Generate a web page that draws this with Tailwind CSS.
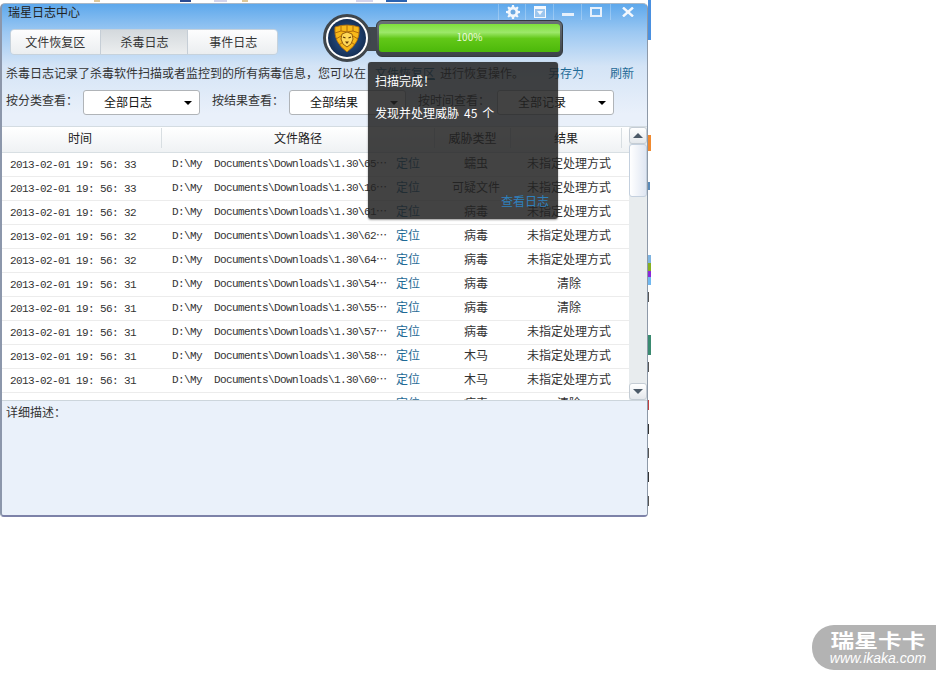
<!DOCTYPE html>
<html lang="zh-CN">

<head>
  <meta charset="UTF-8">
  <title>瑞星日志中心</title>
  <script src="https://cdn.jsdelivr.net/npm/@tailwindcss/browser@4"></script>
</head>

<body class="bg-white font-['Noto_Sans_CJK_SC','Liberation_Sans',sans-serif] text-[12px] leading-none text-[#333]">
  <div class="relative h-[677px] w-[946px] overflow-hidden pt-[3px]">

    <!-- Bits of the page behind the window -->
    <div class="absolute top-0 left-[94px] h-[2px] w-[6px] bg-[#e0c898]"></div>
    <div class="absolute top-0 left-[180px] h-[2px] w-[11px] bg-[#2a4a90]"></div>
    <div class="absolute top-0 left-[214px] h-[2px] w-[13px] bg-[#d4d4ec]"></div>
    <div class="absolute top-0 left-[242px] h-[2px] w-[6px] bg-[#e0c898]"></div>
    <div class="absolute top-0 left-[356px] h-[2px] w-[17px] bg-[#d4d4ec]"></div>
    <div class="absolute top-0 left-[386px] h-[2px] w-[21px] bg-[#2a62b0]"></div>
    <div class="absolute top-0 left-[648px] h-[40px] w-[3px] bg-[#4a90e0]"></div>
    <div class="absolute top-[135px] left-[648px] h-[16px] w-[3px] bg-[#f08a30]"></div>
    <div class="absolute top-[182px] left-[648px] h-[8px] w-[2px] bg-[#5a8ab8]"></div>
    <div class="absolute top-[255px] left-[648px] h-[8px] w-[3px] bg-[#7fb4e0]"></div>
    <div class="absolute top-[263px] left-[648px] h-[8px] w-[3px] bg-[#86b020]"></div>
    <div class="absolute top-[271px] left-[648px] h-[6px] w-[3px] bg-[#8a28d8]"></div>
    <div class="absolute top-[277px] left-[648px] h-[8px] w-[3px] bg-[#70b8f0]"></div>
    <div class="absolute top-[292px] left-[648px] h-[10px] w-[1px] bg-[#555]"></div>
    <div class="absolute top-[335px] left-[648px] h-[20px] w-[3px] bg-[#3a8a70]"></div>
    <div class="absolute top-[362px] left-[648px] h-[10px] w-[1px] bg-[#555]"></div>
    <div class="absolute top-[400px] left-[648px] h-[10px] w-[1px] bg-[#c04040]"></div>
    <div class="absolute top-[424px] left-[648px] h-[10px] w-[1px] bg-[#333]"></div>
    <div class="absolute top-[448px] left-[648px] h-[10px] w-[1px] bg-[#555]"></div>
    <div class="absolute top-[472px] left-[648px] h-[10px] w-[1px] bg-[#333]"></div>
    <div class="absolute top-[496px] left-[648px] h-[10px] w-[1px] bg-[#555]"></div>

    <!-- Window -->
    <div class="relative flex h-[514px] w-[648px] flex-col overflow-hidden rounded-t-[5px] rounded-b-[4px] border-t border-r border-b-2 border-l-2 border-t-[#a8b8c8] border-r-[#8d99a8] border-b-[#7d82a8] border-l-[#8c97ab] bg-[linear-gradient(180deg,#5da8ec_0px,#9cc8f2_28px,#d4e4f6_62px,#e9f0fa_110px)]">

      <!-- Title bar -->
      <div class="flex h-[16px] items-start justify-between">
        <span class="pt-[2px] pl-[6px] text-[#222]">瑞星日志中心</span>
        <div class="flex h-[16px] pr-[2px] text-white">
          <div class="flex w-[28px] items-center justify-center border-x border-white/25 pl-[1px]">
            <svg width="14" height="14" viewBox="0 0 14 14">
              <path d="M6 0h2l.4 2 1.3.6L11.400 1.500 12.600 2.800l-1.100 1.600.5 1.300 2 .3v2l-2 .4-.5 1.300 1.100 1.700-1.300 1.200-1.700-1.100-1.200.5-.4 2H6l-.4-2-1.300-.5-1.600 1.100-1.300-1.200 1.100-1.700-.5-1.300L0 8V6l2-.3.500-1.300L1.400 2.800 2.700 1.500l1.600 1.100L5.600 2z" fill="#f2f7fd" />
              <circle cx="7" cy="7" r="2.500" fill="#6da9e0" />
            </svg>
          </div>
          <div class="flex w-[28px] items-center justify-center border-r border-white/25">
            <svg width="12" height="12" viewBox="0 0 12 12">
              <rect x="0.500" y="0.500" width="11" height="11" fill="#9cc6ee" stroke="#f4f8fd" />
              <path d="M1 1h10v2H1z" fill="#f4f8fd" />
              <path d="M3 5h6L6 9z" fill="#f4f8fd" />
            </svg>
          </div>
          <div class="flex w-[28px] items-center justify-center border-r border-white/25">
            <div class="mt-[5px] h-[3px] w-[12px] bg-[#e6f0fb]"></div>
          </div>
          <div class="flex w-[29px] items-center justify-center border-r border-white/25">
            <div class="h-[10px] w-[12px] border-2 border-[#e6f0fb]"></div>
          </div>
          <div class="flex w-[34px] items-center justify-center">
            <svg width="12" height="10" viewBox="0 0 12 10">
              <path d="M1 0.500l10 9M11 0.500l-10 9" stroke="#f4f8fd" stroke-width="2.400" />
            </svg>
          </div>
        </div>
      </div>

      <!-- Tabs -->
      <div class="mt-[9px] ml-[8px] flex h-[26px] w-[268px] overflow-hidden rounded-[4px] border border-[#c6d2dc] text-[#333]">
        <div class="flex w-[89px] items-center justify-center bg-[linear-gradient(180deg,#fdfdfe,#ebeef0)] pb-[1px]">文件恢复区</div>
        <div class="flex w-[89px] items-center justify-center border-x border-[#c6ced6] bg-[linear-gradient(180deg,#d4d9dd,#eceeef)] pb-[1px] pl-[1px]">杀毒日志</div>
        <div class="flex w-[89px] items-center justify-center bg-[linear-gradient(180deg,#fdfdfe,#ebeef0)] pb-[1px] pl-[1px]">事件日志</div>
      </div>

      <!-- Intro line -->
      <div class="mt-[11px] flex h-[14px] items-center pl-[4px] whitespace-pre">
        <span class="w-[369px]">杀毒日志记录了杀毒软件扫描或者监控到的所有病毒信息，您可以在</span>
        <span class="w-[65px] text-[#1f6a96] underline">文件恢复区</span>
        <span class="w-[108px]">进行恢复操作。</span>
        <span class="w-[62px] text-[#1f6a96]">另存为</span>
        <span class="text-[#1f6a96]">刷新</span>
      </div>

      <!-- Filters -->
      <div class="mt-[10px] flex h-[25px] items-start pl-[4px]">
        <span class="mt-[4px] w-[77px] text-[#333]">按分类查看：</span>
        <div class="flex h-[25px] w-[117px] items-center justify-between rounded-[3px] border border-[#b0b4b8] bg-white pr-[7px] pb-[2px] pl-[20px] text-[#111]">全部日志<i class="mt-[3px] h-0 w-0 border-x-[4px] border-t-[4px] border-x-transparent border-t-black"></i></div>
        <span class="mt-[4px] ml-[12px] w-[77px] text-[#333]">按结果查看：</span>
        <div class="flex h-[25px] w-[117px] items-center justify-between rounded-[3px] border border-[#b0b4b8] bg-white pr-[7px] pb-[2px] pl-[20px] text-[#111]">全部结果<i class="mt-[3px] h-0 w-0 border-x-[4px] border-t-[4px] border-x-transparent border-t-black"></i></div>
        <span class="mt-[4px] ml-[12px] w-[79px] text-[#333]">按时间查看：</span>
        <div class="flex h-[25px] w-[117px] items-center justify-between rounded-[3px] border border-[#b0b4b8] bg-white pr-[7px] pb-[2px] pl-[20px] text-[#111]">全部记录<i class="mt-[3px] h-0 w-0 border-x-[4px] border-t-[4px] border-x-transparent border-t-black"></i></div>
      </div>

      <!-- Table with scrollbar -->
      <div class="mt-[11px] flex h-[274px] border-t border-[#d4dce2] bg-white">
        <div class="w-[628px] overflow-hidden">
          <div class="flex h-[26px] items-center border-b border-[#d8dfe3] bg-[linear-gradient(180deg,#ffffff,#eff2f4)] pb-[4px] text-[#222]">
            <div class="flex h-[20px] w-[160px] items-center justify-center border-r border-[#d8dee2] pr-[3px]">时间</div>
            <div class="flex h-[20px] w-[273px] items-center justify-center border-r border-[#d8dee2]">文件路径</div>
            <div class="flex h-[20px] w-[76px] items-center justify-center border-r border-[#d8dee2]">威胁类型</div>
            <div class="flex h-[20px] w-[111px] items-center justify-center border-r border-[#d8dee2]">结果</div>
          </div>

          <div class="flex h-[24px] items-center border-b border-[#ececec]">
            <span class="mt-[2px] w-[160px] pl-[8px] font-['Liberation_Mono',monospace] text-[11px] tracking-[-0.600px] whitespace-pre">2013-02-01 19: 56: 33</span>
            <span class="mb-[2px] w-[223px] pl-[10px] font-['Liberation_Mono',monospace] text-[11px] tracking-[-0.600px] whitespace-pre">D:\My  Documents\Downloads\1.30\65<b class="font-['Noto_Sans_CJK_SC'] font-normal tracking-normal">⋯</b></span>
            <span class="mb-[4px] w-[50px] pl-[11px] text-[#1f6a96]">定位</span>
            <span class="mb-[4px] w-[82px] text-center">蠕虫</span>
            <span class="mb-[4px] w-[104px] text-center">未指定处理方式</span>
          </div>
          <div class="flex h-[24px] items-center border-b border-[#ececec]">
            <span class="mt-[2px] w-[160px] pl-[8px] font-['Liberation_Mono',monospace] text-[11px] tracking-[-0.600px] whitespace-pre">2013-02-01 19: 56: 33</span>
            <span class="mb-[2px] w-[223px] pl-[10px] font-['Liberation_Mono',monospace] text-[11px] tracking-[-0.600px] whitespace-pre">D:\My  Documents\Downloads\1.30\16<b class="font-['Noto_Sans_CJK_SC'] font-normal tracking-normal">⋯</b></span>
            <span class="mb-[4px] w-[50px] pl-[11px] text-[#1f6a96]">定位</span>
            <span class="mb-[4px] w-[82px] text-center">可疑文件</span>
            <span class="mb-[4px] w-[104px] text-center">未指定处理方式</span>
          </div>
          <div class="flex h-[24px] items-center border-b border-[#ececec]">
            <span class="mt-[2px] w-[160px] pl-[8px] font-['Liberation_Mono',monospace] text-[11px] tracking-[-0.600px] whitespace-pre">2013-02-01 19: 56: 32</span>
            <span class="mb-[2px] w-[223px] pl-[10px] font-['Liberation_Mono',monospace] text-[11px] tracking-[-0.600px] whitespace-pre">D:\My  Documents\Downloads\1.30\61<b class="font-['Noto_Sans_CJK_SC'] font-normal tracking-normal">⋯</b></span>
            <span class="mb-[4px] w-[50px] pl-[11px] text-[#1f6a96]">定位</span>
            <span class="mb-[4px] w-[82px] text-center">病毒</span>
            <span class="mb-[4px] w-[104px] text-center">未指定处理方式</span>
          </div>
          <div class="flex h-[24px] items-center border-b border-[#ececec]">
            <span class="mt-[2px] w-[160px] pl-[8px] font-['Liberation_Mono',monospace] text-[11px] tracking-[-0.600px] whitespace-pre">2013-02-01 19: 56: 32</span>
            <span class="mb-[2px] w-[223px] pl-[10px] font-['Liberation_Mono',monospace] text-[11px] tracking-[-0.600px] whitespace-pre">D:\My  Documents\Downloads\1.30\62<b class="font-['Noto_Sans_CJK_SC'] font-normal tracking-normal">⋯</b></span>
            <span class="mb-[4px] w-[50px] pl-[11px] text-[#1f6a96]">定位</span>
            <span class="mb-[4px] w-[82px] text-center">病毒</span>
            <span class="mb-[4px] w-[104px] text-center">未指定处理方式</span>
          </div>
          <div class="flex h-[24px] items-center border-b border-[#ececec]">
            <span class="mt-[2px] w-[160px] pl-[8px] font-['Liberation_Mono',monospace] text-[11px] tracking-[-0.600px] whitespace-pre">2013-02-01 19: 56: 32</span>
            <span class="mb-[2px] w-[223px] pl-[10px] font-['Liberation_Mono',monospace] text-[11px] tracking-[-0.600px] whitespace-pre">D:\My  Documents\Downloads\1.30\64<b class="font-['Noto_Sans_CJK_SC'] font-normal tracking-normal">⋯</b></span>
            <span class="mb-[4px] w-[50px] pl-[11px] text-[#1f6a96]">定位</span>
            <span class="mb-[4px] w-[82px] text-center">病毒</span>
            <span class="mb-[4px] w-[104px] text-center">未指定处理方式</span>
          </div>
          <div class="flex h-[24px] items-center border-b border-[#ececec]">
            <span class="mt-[2px] w-[160px] pl-[8px] font-['Liberation_Mono',monospace] text-[11px] tracking-[-0.600px] whitespace-pre">2013-02-01 19: 56: 31</span>
            <span class="mb-[2px] w-[223px] pl-[10px] font-['Liberation_Mono',monospace] text-[11px] tracking-[-0.600px] whitespace-pre">D:\My  Documents\Downloads\1.30\54<b class="font-['Noto_Sans_CJK_SC'] font-normal tracking-normal">⋯</b></span>
            <span class="mb-[4px] w-[50px] pl-[11px] text-[#1f6a96]">定位</span>
            <span class="mb-[4px] w-[82px] text-center">病毒</span>
            <span class="mb-[4px] w-[104px] text-center">清除</span>
          </div>
          <div class="flex h-[24px] items-center border-b border-[#ececec]">
            <span class="mt-[2px] w-[160px] pl-[8px] font-['Liberation_Mono',monospace] text-[11px] tracking-[-0.600px] whitespace-pre">2013-02-01 19: 56: 31</span>
            <span class="mb-[2px] w-[223px] pl-[10px] font-['Liberation_Mono',monospace] text-[11px] tracking-[-0.600px] whitespace-pre">D:\My  Documents\Downloads\1.30\55<b class="font-['Noto_Sans_CJK_SC'] font-normal tracking-normal">⋯</b></span>
            <span class="mb-[4px] w-[50px] pl-[11px] text-[#1f6a96]">定位</span>
            <span class="mb-[4px] w-[82px] text-center">病毒</span>
            <span class="mb-[4px] w-[104px] text-center">清除</span>
          </div>
          <div class="flex h-[24px] items-center border-b border-[#ececec]">
            <span class="mt-[2px] w-[160px] pl-[8px] font-['Liberation_Mono',monospace] text-[11px] tracking-[-0.600px] whitespace-pre">2013-02-01 19: 56: 31</span>
            <span class="mb-[2px] w-[223px] pl-[10px] font-['Liberation_Mono',monospace] text-[11px] tracking-[-0.600px] whitespace-pre">D:\My  Documents\Downloads\1.30\57<b class="font-['Noto_Sans_CJK_SC'] font-normal tracking-normal">⋯</b></span>
            <span class="mb-[4px] w-[50px] pl-[11px] text-[#1f6a96]">定位</span>
            <span class="mb-[4px] w-[82px] text-center">病毒</span>
            <span class="mb-[4px] w-[104px] text-center">未指定处理方式</span>
          </div>
          <div class="flex h-[24px] items-center border-b border-[#ececec]">
            <span class="mt-[2px] w-[160px] pl-[8px] font-['Liberation_Mono',monospace] text-[11px] tracking-[-0.600px] whitespace-pre">2013-02-01 19: 56: 31</span>
            <span class="mb-[2px] w-[223px] pl-[10px] font-['Liberation_Mono',monospace] text-[11px] tracking-[-0.600px] whitespace-pre">D:\My  Documents\Downloads\1.30\58<b class="font-['Noto_Sans_CJK_SC'] font-normal tracking-normal">⋯</b></span>
            <span class="mb-[4px] w-[50px] pl-[11px] text-[#1f6a96]">定位</span>
            <span class="mb-[4px] w-[82px] text-center">木马</span>
            <span class="mb-[4px] w-[104px] text-center">未指定处理方式</span>
          </div>
          <div class="flex h-[24px] items-center border-b border-[#ececec]">
            <span class="mt-[2px] w-[160px] pl-[8px] font-['Liberation_Mono',monospace] text-[11px] tracking-[-0.600px] whitespace-pre">2013-02-01 19: 56: 31</span>
            <span class="mb-[2px] w-[223px] pl-[10px] font-['Liberation_Mono',monospace] text-[11px] tracking-[-0.600px] whitespace-pre">D:\My  Documents\Downloads\1.30\60<b class="font-['Noto_Sans_CJK_SC'] font-normal tracking-normal">⋯</b></span>
            <span class="mb-[4px] w-[50px] pl-[11px] text-[#1f6a96]">定位</span>
            <span class="mb-[4px] w-[82px] text-center">木马</span>
            <span class="mb-[4px] w-[104px] text-center">未指定处理方式</span>
          </div>
          <div class="flex h-[24px] items-center">
            <span class="mt-[2px] w-[160px] pl-[8px] font-['Liberation_Mono',monospace] text-[11px] tracking-[-0.600px] whitespace-pre">2013-02-01 19: 56: 31</span>
            <span class="mb-[2px] w-[223px] pl-[10px] font-['Liberation_Mono',monospace] text-[11px] tracking-[-0.600px] whitespace-pre">D:\My  Documents\Downloads\1.30\51<b class="font-['Noto_Sans_CJK_SC'] font-normal tracking-normal">⋯</b></span>
            <span class="mb-[4px] w-[50px] pl-[11px] text-[#1f6a96]">定位</span>
            <span class="mb-[4px] w-[82px] text-center">病毒</span>
            <span class="mb-[4px] w-[104px] text-center">清除</span>
          </div>
        </div>

        <!-- Scrollbar -->
        <div class="flex w-[18px] flex-col bg-[#e8ecee]">
          <div class="flex h-[17px] items-center justify-center rounded-[3px] border border-[#c4ccd4] bg-[linear-gradient(180deg,#ffffff,#e4e8ec)]">
            <i class="h-0 w-0 border-x-[5px] border-b-[5px] border-x-transparent border-b-[#4c5a68]"></i>
          </div>
          <div class="h-[53px] rounded-[3px] border border-[#c4d0de] bg-[linear-gradient(90deg,#ffffff,#dfe6f2)]"></div>
          <div class="flex-1"></div>
          <div class="flex h-[17px] items-center justify-center rounded-[3px] border border-[#c4ccd4] bg-[linear-gradient(180deg,#ffffff,#e4e8ec)]">
            <i class="h-0 w-0 border-x-[5px] border-t-[5px] border-x-transparent border-t-[#4c5a68]"></i>
          </div>
        </div>
      </div>

      <!-- Detail panel -->
      <div class="flex-1 border-t border-[#cdd6dc] bg-[#eaf1fa] pt-[5px] pl-[4px] text-[#333]">详细描述：</div>

      <!-- Progress widget, overlaps the window header -->
      <div class="absolute top-[16px] left-[374px] h-[37px] w-[187px] rounded-[6px] border border-[#33393e] bg-[linear-gradient(180deg,#6a7076,#3c4248)] px-[2px] pt-[3px]">
        <div class="flex h-[28px] items-center justify-center rounded-[3px] bg-[linear-gradient(180deg,#7fe03c_0%,#9ce86a_30%,#62c818_52%,#4cb80a_100%)] pb-[3px] text-[10px] text-[#eaf8dc]">100%</div>
      </div>
      <div class="absolute top-[23px] left-[360px] h-[24px] w-[15px] bg-[#41474d]"></div>
      <div class="absolute top-[10px] left-[321px] flex h-[48px] w-[48px] items-center justify-center rounded-full border-[3px] border-[#3f464c] bg-white">
        <div class="flex h-[38px] w-[38px] items-center justify-center rounded-full bg-[radial-gradient(circle,#2c5c9c,#0c1d38)]">
          <svg width="28" height="29" viewBox="0 0 28 29">
            <path d="M2 3Q14-1 26 3 28 18 14 28 0 18 2 3z" fill="#f7b818" stroke="#b87008" stroke-width="0.800" />
            <path d="M2 9l6-2 6 1 6-1 6 2M3 15l5-3M25 15l-5-3M6 21l4-3M22 21l-4-3M8 2l0 5M20 2l0 5M14 1v6" fill="none" stroke="#a86408" stroke-width="0.900" />
            <path d="M14 8l5 2 1 5-2 5-4 3-4-3-2-5 1-5z" fill="#ffd858" stroke="#8a5208" stroke-width="0.900" />
            <path d="M10 13l2.500 1M18 13l-2.500 1" stroke="#5a3404" stroke-width="1.200" />
            <path d="M12 17.500h4l-2 2.500z" fill="#6a3e06" />
          </svg>
        </div>
      </div>

      <!-- Scan finished popup -->
      <div class="absolute top-[58px] left-[366px] h-[157px] w-[190px] rounded-[3px] bg-[#222]/85 text-white shadow-[0_1px_2px_rgba(0,0,0,0.4)]">
        <p class="pt-[13px] pl-[7px]">扫描完成！</p>
        <p class="mt-[20px] pl-[7px] whitespace-pre">发现并处理威胁<span class="px-[5px]">45</span>个</p>
        <p class="mt-[76px] pl-[133px] text-[#2f80bc]">查看日志</p>
      </div>
    </div>

    <!-- Ikaka watermark -->
    <div class="absolute top-[625px] left-[812px] flex h-[45px] w-[124px] flex-col items-center justify-center rounded-l-[22px] bg-[#b3b3b3] pl-[8px] text-white">
      <span class="scale-x-125 text-[19px] leading-[20px] font-bold">瑞星卡卡</span>
      <span class="mt-[1px] font-['Liberation_Sans',sans-serif] text-[14px] leading-[15px] italic">www.ikaka.com</span>
    </div>
  </div>
</body>

</html>
